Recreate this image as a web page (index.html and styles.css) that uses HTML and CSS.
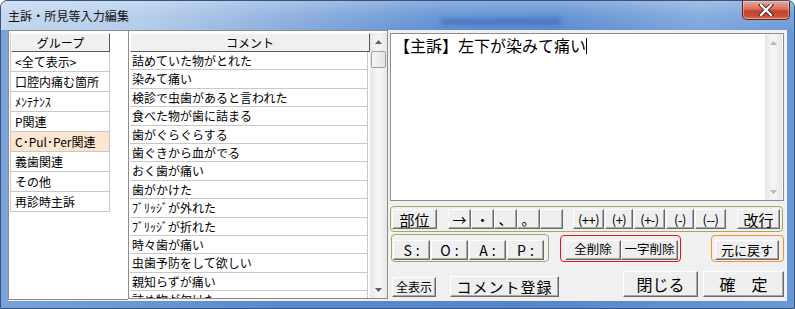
FILE: index.html
```html
<!DOCTYPE html>
<html lang="ja">
<head>
<meta charset="utf-8">
<title>主訴・所見等入力編集</title>
<link rel="stylesheet" href="styles.css">
</head>
<body>
<div class="window">
  <div class="titlebar">
    <span class="title">主訴・所見等入力編集</span>
    <span class="glass-blur"></span>
    <div class="close">
      <svg width="16" height="12" viewBox="0 0 16 12"><path d="M3 1 L13 11 M13 1 L3 11" stroke="#3a1410" stroke-width="4" stroke-linecap="square"/><path d="M3 1 L13 11 M13 1 L3 11" stroke="#fff" stroke-width="2.4" stroke-linecap="square"/></svg>
    </div>
  </div>
  <div class="client">
    <div class="group-panel">
      <div class="group-table">
        <div class="hdr">グループ</div>
        <div class="grow">&lt;全て表示&gt;</div>
        <div class="grow">口腔内痛む箇所</div>
        <div class="grow">ﾒﾝﾃﾅﾝｽ</div>
        <div class="grow">P関連</div>
        <div class="grow sel">C･Pul･Per関連</div>
        <div class="grow">義歯関連</div>
        <div class="grow">その他</div>
        <div class="grow">再診時主訴</div>
      </div>
    </div>
    <div class="comment-panel">
      <div class="comment-table">
        <div class="hdr">コメント</div>
        <div class="crow">詰めていた物がとれた</div>
        <div class="crow">染みて痛い</div>
        <div class="crow">検診で虫歯があると言われた</div>
        <div class="crow">食べた物が歯に詰まる</div>
        <div class="crow">歯がぐらぐらする</div>
        <div class="crow">歯ぐきから血がでる</div>
        <div class="crow">おく歯が痛い</div>
        <div class="crow">歯がかけた</div>
        <div class="crow">ﾌﾞﾘｯｼﾞが外れた</div>
        <div class="crow">ﾌﾞﾘｯｼﾞが折れた</div>
        <div class="crow">時々歯が痛い</div>
        <div class="crow">虫歯予防をして欲しい</div>
        <div class="crow">親知らずが痛い</div>
        <div class="crow">詰め物が欠けた</div>
      </div>
      <div class="vscroll">
        <div class="sb-btn"><svg width="7" height="4" viewBox="0 0 7 4"><path d="M0 4 L3.5 0 L7 4Z" fill="#606060"/></svg></div>
        <div class="sb-thumb"></div>
        <div class="sb-track"></div>
        <div class="sb-btn"><svg width="7" height="4" viewBox="0 0 7 4"><path d="M0 0 L3.5 4 L7 0Z" fill="#606060"/></svg></div>
      </div>
    </div>
    <div class="right">
      <div class="memo">
        <div class="memo-text">【主訴】左下が染みて痛い<span class="caret"></span></div>
        <div class="vscroll memo-scroll">
          <div class="sb-btn"><svg width="7" height="4" viewBox="0 0 7 4"><path d="M0 4 L3.5 0 L7 4Z" fill="#b8b8b8"/></svg></div>
          <div class="sb-track"></div>
          <div class="sb-btn"><svg width="7" height="4" viewBox="0 0 7 4"><path d="M0 0 L3.5 4 L7 0Z" fill="#b8b8b8"/></svg></div>
        </div>
      </div>
      <div class="box olive row1">
        <div class="btn b-bui">部位</div>
        <div class="btn b-sym first">→</div>
        <div class="btn b-sym">・</div>
        <div class="btn b-sym">、</div>
        <div class="btn b-sym">。</div>
        <div class="btn b-sym"></div>
        <div class="btn b-pm first">(++)</div>
        <div class="btn b-pm narrow">(+)</div>
        <div class="btn b-pm">(+-)</div>
        <div class="btn b-pm narrow">(-)</div>
        <div class="btn b-pm">(--)</div>
        <div class="btn b-kaigyo">改行</div>
      </div>
      <div class="row2">
        <div class="box olive soap">
          <div class="btn b-soap">S:</div>
          <div class="btn b-soap">O:</div>
          <div class="btn b-soap">A:</div>
          <div class="btn b-soap">P:</div>
        </div>
        <div class="box red del">
          <div class="btn b-del">全削除</div>
          <div class="btn b-del wide">一字削除</div>
        </div>
        <div class="box orange undo">
          <div class="btn b-undo">元に戻す</div>
        </div>
      </div>
      <div class="row3">
        <div class="btn b-all">全表示</div>
        <div class="btn b-reg">コメント登録</div>
        <div class="btn b-big b-close">閉じる</div>
        <div class="btn b-big b-ok">確　定</div>
      </div>
    </div>
  </div>
</div>
</body>
</html>
```
FILE: styles.css
```css
* { box-sizing: border-box; }
html, body { margin: 0; padding: 0; background: #ffffff; }
body {
  width: 795px;
  height: 309px;
  overflow: hidden;
  font-family: "Noto Sans CJK JP", "Noto Sans", sans-serif;
  color: #000;
}

.window {
  width: 795px;
  height: 309px;
  display: flex;
  flex-direction: column;
  border: 1px solid #34557f;
  border-radius: 7px 7px 0 0;
  background: linear-gradient(90deg, #7aa2d8 0%, #5b89cd 35%, #5685cb 65%, #6a98d4 100%);
  padding: 0 7px 7px 7px;
  overflow: hidden;
}

.titlebar {
  flex: 0 0 29px;
  height: 29px;
  margin: 0 -7px;
  padding-left: 7px;
  display: flex;
  align-items: flex-start;
  position: relative;
  background:
    linear-gradient(180deg, rgba(255,255,255,0.28) 0%, rgba(255,255,255,0.08) 50%, rgba(255,255,255,0) 100%),
    linear-gradient(90deg, #c2d6ee 0%, #b2cbea 18%, #86aadc 38%, #6190d2 55%, #5b8bd0 70%, #80a7dc 88%, #6f9bd6 100%);
}
.title {
  font-size: 12px;
  line-height: 14px;
  margin-top: 8px;
  color: #111;
  letter-spacing: 0.1px;
}
.glass-blur {
  position: absolute;
  left: 440px;
  top: 17px;
  width: 120px;
  height: 7px;
  background: rgba(40, 70, 170, 0.35);
  filter: blur(2px);
}
.close {
  margin-left: auto;
  margin-right: 4px;
  width: 48px;
  height: 19px;
  border: 1px solid #5e2418;
  border-top: none;
  border-radius: 0 0 5px 5px;
  background: linear-gradient(180deg, #e9a89a 0%, #d6705c 45%, #c2402c 55%, #c94f35 85%, #dc7a58 100%);
  display: flex;
  align-items: center;
  justify-content: center;
  box-shadow: inset 0 0 0 1px rgba(255,220,210,0.45);
}

.client {
  flex: 1 1 auto;
  min-height: 0;
  overflow: hidden;
  background: #f0f0f0;
  display: flex;
  align-items: stretch;
}

/* group list */
.group-panel {
  width: 120px;
  margin-bottom: 1px;
  background: #fff;
  border: 1px solid #8c8c8c;
  border-right: none;
  padding: 2px 0 0 1px;
}
.group-table {
  width: 100px;
  border-left: 1px solid #c8c8c8;
}
.hdr {
  height: 19px;
  background: #f0f0f0;
  border-top: 1px solid #fff;
  border-left: 1px solid #fff;
  border-right: 1px solid #5a5a5a;
  border-bottom: 1px solid #5a5a5a;
  font-size: 12px;
  line-height: 17px;
  text-align: center;
}
.grow {
  height: 20px;
  border-right: 1px solid #c8c8c8;
  border-bottom: 1px solid #c8c8c8;
  font-size: 12px;
  line-height: 19px;
  padding-left: 4px;
  white-space: nowrap;
  overflow: hidden;
}
.grow.sel { background: #fde6cf; }

/* comment list */
.comment-panel {
  width: 260px;
  min-height: 0;
  margin-bottom: 2px;
  background: #fff;
  border: 1px solid #8c8c8c;
  padding: 2px 0 0 1px;
  display: flex;
  align-items: stretch;
  overflow: hidden;
}
.comment-table {
  width: 240px;
  overflow: hidden;
}
.crow {
  height: 18.4px;
  border-right: 1px solid #c8c8c8;
  border-bottom: 1px solid #c8c8c8;
  margin-right: 2px;
  font-size: 12px;
  line-height: 17.4px;
  padding-left: 2px;
  white-space: nowrap;
}

.vscroll {
  width: 17px;
  display: flex;
  flex-direction: column;
  background: linear-gradient(90deg, #e6e6e6, #f4f4f4 40%, #f4f4f4 60%, #e6e6e6);
}
.sb-btn {
  height: 17px;
  display: flex;
  align-items: center;
  justify-content: center;
}
.sb-thumb {
  height: 17px;
  margin: 1px 1px 0 1px;
  border: 1px solid #a0a0a0;
  border-radius: 2px;
  background: linear-gradient(90deg, #f6f6f6, #e4e4e4);
}
.sb-track { flex: 1; }

/* right side */
.right {
  width: 394px;
  margin-left: 2px;
  display: flex;
  flex-direction: column;
}
.memo {
  margin-top: 3px;
  height: 168px;
  flex: 0 0 168px;
  background: #fff;
  border: 1px solid #8c8c8c;
  display: flex;
}
.memo-text {
  flex: 1;
  font-size: 16px;
  line-height: 18px;
  padding: 2px 0 0 3px;
  white-space: nowrap;
}
.caret {
  display: inline-block;
  width: 1px;
  height: 16px;
  background: #000;
  vertical-align: -2px;
}
.memo-scroll { margin: 0 1px 0 0; }

.box {
  border: 1px solid #a8a466;
  border-radius: 4px;
  display: flex;
  align-items: center;
}
.box.olive { border-color: #a8a466; }
.box.red { border-color: #e8141c; }
.box.orange { border-color: #f2942c; }

.btn {
  flex: 0 0 auto;
  height: 20px;
  background: #efefef;
  border: 1px solid;
  border-color: #ffffff #6a6a6a #6a6a6a #ffffff;
  box-shadow: inset -1px -1px 0 #a8a8a8;
  display: flex;
  align-items: center;
  justify-content: center;
  font-size: 13px;
  line-height: 1;
  white-space: nowrap;
}

.row1 {
  margin-top: 5px;
  flex: 0 0 26px;
  height: 26px;
  width: 393px;
  padding: 0 2px 0 1px;
}
.b-bui { width: 45px; font-size: 15px; }
.b-sym { width: 23px; font-size: 14px; }
.b-sym.first { margin-left: 11px; }
.b-pm { width: 31px; font-size: 13px; letter-spacing: -0.5px; }
.b-pm.narrow { width: 28px; }
.b-pm.first { margin-left: 10px; }
.b-pm + .b-pm { margin-left: 1px; }
.b-kaigyo { width: 43px; margin-left: auto; font-size: 15px; }

.row2 {
  margin-top: 2px;
  flex: 0 0 28px;
  height: 28px;
  display: flex;
}
.soap {
  width: 158px;
  margin-left: 1px;
  padding: 3px 0 0 1px;
  gap: 1px;
}
.b-soap { width: 37px; font-size: 14px; letter-spacing: 4px; padding-left: 4px; }
.del {
  width: 121px;
  margin-left: 11px;
  margin-top: 1px;
  padding: 2px 0 0 4px;
}
.b-del { width: 56px; font-size: 12.5px; }
.b-del.wide { width: 57px; }
.undo {
  width: 73px;
  margin-left: 30px;
  margin-top: 1px;
  padding: 2px 0 0 3px;
}
.b-undo { width: 64px; font-size: 13px; }

.row3 {
  margin-top: 9px;
  flex: 0 0 26px;
  height: 26px;
  display: flex;
  align-items: flex-end;
}
.b-all { width: 44px; margin-left: 2px; font-size: 12px; }
.b-reg { width: 109px; height: 21px; margin-left: 14px; font-size: 15px; letter-spacing: 1px; }
.b-big { height: 26px; font-size: 16px; }
.b-close { width: 75px; margin-left: 64px; }
.b-ok { width: 81px; margin-left: 5px; }
```
